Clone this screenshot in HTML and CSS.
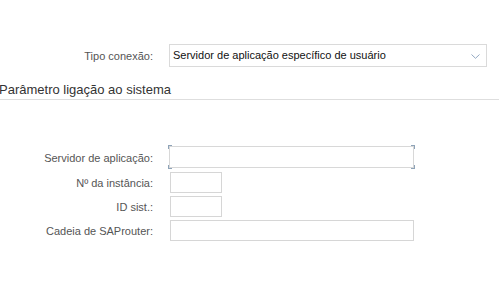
FILE: index.html
```html
<!DOCTYPE html>
<html lang="pt">
<head>
  <meta charset="UTF-8" />
  <meta name="viewport" content="width=device-width, initial-scale=1.0" />
  <title>Parâmetro ligação</title>
  <link rel="stylesheet" href="styles.css">
</head>
<body>
  <div class="row conn">
    <label class="lbl">Tipo conexão:</label>
    <div class="select">
      <span>Servidor de aplicação específico de usuário</span>
      <svg class="chev" width="9" height="5" viewBox="0 0 9 5"><path d="M0.5 0.5 L4.5 4.3 L8.5 0.5" fill="none" stroke="#93a8c2" stroke-width="1"/></svg>
    </div>
  </div>

  <h3 class="section">Parâmetro ligação ao sistema</h3>

  <div class="form">
    <div class="row">
      <label class="lbl">Servidor de aplicação:</label>
      <div class="field wide focus">
        <input type="text" />
        <i class="crn tl"></i><i class="crn tr"></i><i class="crn bl"></i><i class="crn br"></i>
      </div>
    </div>
    <div class="row">
      <label class="lbl">Nº da instância:</label>
      <div class="field small"><input type="text" /></div>
    </div>
    <div class="row">
      <label class="lbl">ID sist.:</label>
      <div class="field small"><input type="text" /></div>
    </div>
    <div class="row">
      <label class="lbl">Cadeia de SAProuter:</label>
      <div class="field wide"><input type="text" /></div>
    </div>
  </div>
</body>
</html>
```

FILE: styles.css
```css
* { box-sizing: border-box; }
body {
  margin: 0;
  font-family: 'Liberation Sans', Arial, sans-serif;
  font-size: 11px;
  background: #fff;
  color: #222;
}
.row {
  display: grid;
  grid-template-columns: 153px 1fr;
  column-gap: 16px;
  align-items: center;
}
.lbl { text-align: right; color: #555; }
.conn { padding-top: 44px; }
.select {
  width: 318px; height: 23px;
  border: 1px solid #dadada;
  display: flex; align-items: center; justify-content: space-between;
  padding: 0 6px 0 3px;
  color: #111;
}
.select span { margin-top: -2px; }
.chev { margin-top: 1px; }
.section {
  margin: 15px 0 0;
  font-size: 13px; font-weight: normal; color: #333;
  line-height: 15px;
  padding: 0 0 2px;
  text-indent: -1px;
  border-bottom: 1px solid #dedede;
}
.form {
  padding-top: 46px;
  display: flex; flex-direction: column; gap: 3px;
}
.field { position: relative; height: 21px; }
.field input {
  display: block; width: 100%; height: 100%;
  border: 1px solid #d6d6d6; margin: 0; padding: 0 3px;
  font: inherit; outline: none;
}
.wide { width: 244px; margin-left: 1px; }
.small { width: 52px; margin-left: 1px; }
.focus { height: 22px; width: 245px; margin-left: 0; margin-bottom: 1px; }
.focus input { border-color: #d8d8d8; }
.crn { position: absolute; width: 4px; height: 4px; border: 0 solid #8ea3b8; }
.tl { left: -1px; top: -1px; border-left-width: 1px; border-top-width: 1px; }
.tr { right: -1px; top: -1px; border-right-width: 1px; border-top-width: 1px; }
.bl { left: -1px; bottom: -1px; border-left-width: 1px; border-bottom-width: 1px; }
.br { right: -1px; bottom: -1px; border-right-width: 1px; border-bottom-width: 1px; }
```
